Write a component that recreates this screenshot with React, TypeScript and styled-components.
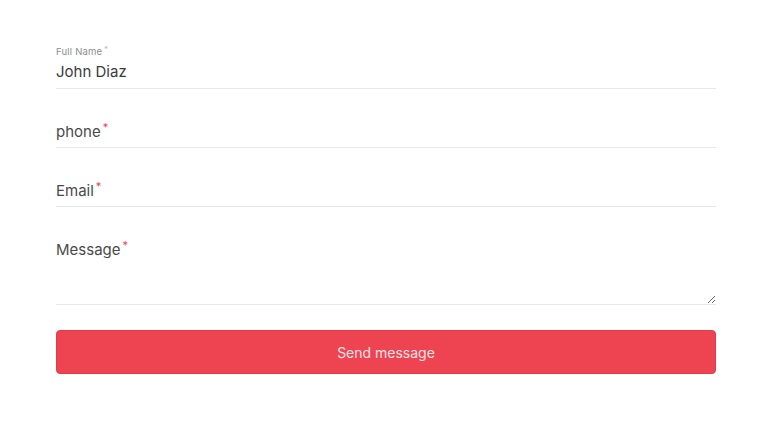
import React from "react";
import styled, { createGlobalStyle } from "styled-components";

const GlobalStyle = createGlobalStyle`
  html, body { margin: 0; padding: 0; background: #ffffff; }
  body { font-family: Inter, "Noto Sans", "Liberation Sans", sans-serif; }
  * { box-sizing: border-box; }
`;

const Form = styled.form`
  display: flex;
  flex-direction: column;
  padding: 30px 52px 0 56px;
`;

/* Each field stacks its label and control in one grid cell (floating label) */
const Field = styled.div<{ $floated?: boolean }>`
  display: grid;
  grid-template-columns: 1fr;
  grid-template-rows: ${(p) => (p.$floated ? "auto auto" : "auto")};
  padding-top: ${(p) => (p.$floated ? "16px" : "26px")};
`;

const Input = styled.input<{ $floated?: boolean }>`
  grid-area: ${(p) => (p.$floated ? "2 / 1" : "1 / 1")};
  display: block;
  width: 100%;
  border: none;
  border-bottom: 1px solid #e8e8e8;
  padding: ${(p) => (p.$floated ? "5px 0 7px" : "6px 0")};
  font-family: inherit;
  font-size: 15px;
  line-height: 20px;
  height: ${(p) => (p.$floated ? "32px" : "33px")};
  color: #3b3b3b;
  background: transparent;
  outline: none;
`;

const TextArea = styled.textarea`
  grid-area: 1 / 1;
  display: block;
  width: 100%;
  height: 72px;
  border: none;
  border-bottom: 1px solid #e8e8e8;
  padding: 6px 0;
  font-family: inherit;
  font-size: 15px;
  line-height: 20px;
  color: #3b3b3b;
  background: transparent;
  outline: none;
  resize: vertical;
`;

const Label = styled.label<{ $floated?: boolean }>`
  grid-area: 1 / 1;
  align-self: start;
  z-index: 1;
  pointer-events: none;
  padding-top: ${(p) => (p.$floated ? "0" : "7px")};
  font-size: ${(p) => (p.$floated ? "9.5px" : "15px")};
  line-height: ${(p) => (p.$floated ? "11px" : "20px")};
  color: ${(p) => (p.$floated ? "#8c8c8c" : "#4a4a4a")};
  letter-spacing: ${(p) => (p.$floated ? "0.2px" : "0")};
`;

const Star = styled.span<{ $floated?: boolean }>`
  color: ${(p) => (p.$floated ? "#b0b0b0" : "#e8465a")};
  font-size: ${(p) => (p.$floated ? "7px" : "11px")};
  vertical-align: top;
  margin-left: 2px;
  line-height: 1;
`;

const Button = styled.button`
  margin-top: 25px;
  height: 44px;
  width: 100%;
  border: 1px solid #e33b4a;
  border-radius: 4px;
  background: #ee4452;
  color: #fbe3e6;
  font-family: inherit;
  font-size: 14px;
  cursor: pointer;
`;

export default function App() {
  return (
    <>
      <GlobalStyle />
      <Form onSubmit={(e) => e.preventDefault()}>
        <Field $floated>
          <Label htmlFor="name" $floated>
            Full Name<Star $floated>*</Star>
          </Label>
          <Input id="name" $floated defaultValue="John Diaz" />
        </Field>
        <Field>
          <Input id="phone" />
          <Label htmlFor="phone">
            phone<Star>*</Star>
          </Label>
        </Field>
        <Field>
          <Input id="email" />
          <Label htmlFor="email">
            Email<Star>*</Star>
          </Label>
        </Field>
        <Field>
          <TextArea id="message" />
          <Label htmlFor="message">
            Message<Star>*</Star>
          </Label>
        </Field>
        <Button type="submit">Send message</Button>
      </Form>
    </>
  );
}
